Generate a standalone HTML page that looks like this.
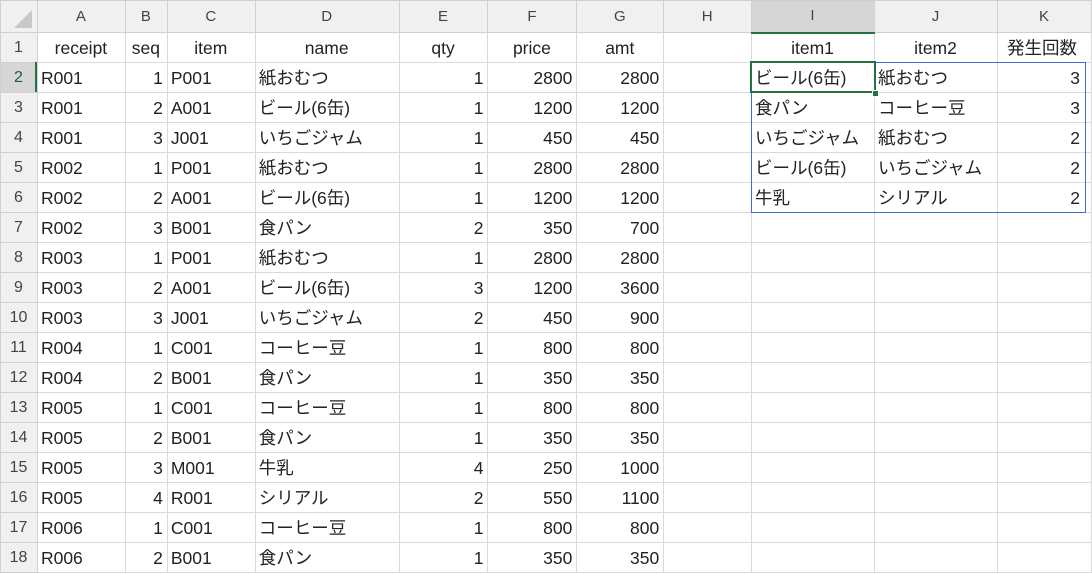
<!DOCTYPE html>
<html><head><meta charset="utf-8"><style>
body{margin:0;background:#fff;width:1092px;height:574px;overflow:hidden;position:relative;font-family:"Liberation Sans","Noto Sans CJK JP",sans-serif;}
table{border-collapse:collapse;table-layout:fixed;position:absolute;left:0;top:0;}
td{border:1px solid #dadada;height:30px;line-height:28px;padding:0 4px 0 3px;font-size:17.5px;color:#222;white-space:nowrap;overflow:hidden;box-sizing:border-box;vertical-align:middle;}
tr.h td{height:32px;background:#f0f0f0;color:#444;text-align:center;font-size:15px;border-color:#d0d0d0;}
td.r{background:#f0f0f0;color:#444;text-align:center;font-size:16px;border-color:#d0d0d0;}
.n{text-align:right}.c{text-align:center}
td.k{padding-right:11px}
</style></head><body>
<table>
<colgroup><col style="width:37px"><col style="width:88px"><col style="width:42px"><col style="width:88px"><col style="width:144px"><col style="width:89px"><col style="width:89px"><col style="width:87px"><col style="width:88px"><col style="width:123px"><col style="width:123px"><col style="width:94px"></colgroup>
<tr class="h"><td></td><td>A</td><td>B</td><td>C</td><td>D</td><td>E</td><td>F</td><td>G</td><td>H</td><td style="background:#d6d6d6;border-bottom:2px solid #217346;color:#1e5e38">I</td><td>J</td><td>K</td></tr>
<tr><td class="r">1</td><td class="c">receipt</td><td class="c">seq</td><td class="c">item</td><td class="c">name</td><td class="c">qty</td><td class="c">price</td><td class="c">amt</td><td></td><td class="c">item1</td><td class="c">item2</td><td class="c" style="padding-right:8px">発生回数</td></tr>
<tr><td class="r" style="background:#d6d6d6;color:#1e5e38">2</td><td>R001</td><td class="n">1</td><td>P001</td><td>紙おむつ</td><td class="n">1</td><td class="n">2800</td><td class="n">2800</td><td></td><td>ビール(6缶)</td><td>紙おむつ</td><td class="n k">3</td></tr>
<tr><td class="r">3</td><td>R001</td><td class="n">2</td><td>A001</td><td>ビール(6缶)</td><td class="n">1</td><td class="n">1200</td><td class="n">1200</td><td></td><td>食パン</td><td>コーヒー豆</td><td class="n k">3</td></tr>
<tr><td class="r">4</td><td>R001</td><td class="n">3</td><td>J001</td><td>いちごジャム</td><td class="n">1</td><td class="n">450</td><td class="n">450</td><td></td><td>いちごジャム</td><td>紙おむつ</td><td class="n k">2</td></tr>
<tr><td class="r">5</td><td>R002</td><td class="n">1</td><td>P001</td><td>紙おむつ</td><td class="n">1</td><td class="n">2800</td><td class="n">2800</td><td></td><td>ビール(6缶)</td><td>いちごジャム</td><td class="n k">2</td></tr>
<tr><td class="r">6</td><td>R002</td><td class="n">2</td><td>A001</td><td>ビール(6缶)</td><td class="n">1</td><td class="n">1200</td><td class="n">1200</td><td></td><td>牛乳</td><td>シリアル</td><td class="n k">2</td></tr>
<tr><td class="r">7</td><td>R002</td><td class="n">3</td><td>B001</td><td>食パン</td><td class="n">2</td><td class="n">350</td><td class="n">700</td><td></td><td></td><td></td><td></td></tr>
<tr><td class="r">8</td><td>R003</td><td class="n">1</td><td>P001</td><td>紙おむつ</td><td class="n">1</td><td class="n">2800</td><td class="n">2800</td><td></td><td></td><td></td><td></td></tr>
<tr><td class="r">9</td><td>R003</td><td class="n">2</td><td>A001</td><td>ビール(6缶)</td><td class="n">3</td><td class="n">1200</td><td class="n">3600</td><td></td><td></td><td></td><td></td></tr>
<tr><td class="r">10</td><td>R003</td><td class="n">3</td><td>J001</td><td>いちごジャム</td><td class="n">2</td><td class="n">450</td><td class="n">900</td><td></td><td></td><td></td><td></td></tr>
<tr><td class="r">11</td><td>R004</td><td class="n">1</td><td>C001</td><td>コーヒー豆</td><td class="n">1</td><td class="n">800</td><td class="n">800</td><td></td><td></td><td></td><td></td></tr>
<tr><td class="r">12</td><td>R004</td><td class="n">2</td><td>B001</td><td>食パン</td><td class="n">1</td><td class="n">350</td><td class="n">350</td><td></td><td></td><td></td><td></td></tr>
<tr><td class="r">13</td><td>R005</td><td class="n">1</td><td>C001</td><td>コーヒー豆</td><td class="n">1</td><td class="n">800</td><td class="n">800</td><td></td><td></td><td></td><td></td></tr>
<tr><td class="r">14</td><td>R005</td><td class="n">2</td><td>B001</td><td>食パン</td><td class="n">1</td><td class="n">350</td><td class="n">350</td><td></td><td></td><td></td><td></td></tr>
<tr><td class="r">15</td><td>R005</td><td class="n">3</td><td>M001</td><td>牛乳</td><td class="n">4</td><td class="n">250</td><td class="n">1000</td><td></td><td></td><td></td><td></td></tr>
<tr><td class="r">16</td><td>R005</td><td class="n">4</td><td>R001</td><td>シリアル</td><td class="n">2</td><td class="n">550</td><td class="n">1100</td><td></td><td></td><td></td><td></td></tr>
<tr><td class="r">17</td><td>R006</td><td class="n">1</td><td>C001</td><td>コーヒー豆</td><td class="n">1</td><td class="n">800</td><td class="n">800</td><td></td><td></td><td></td><td></td></tr>
<tr><td class="r">18</td><td>R006</td><td class="n">2</td><td>B001</td><td>食パン</td><td class="n">1</td><td class="n">350</td><td class="n">350</td><td></td><td></td><td></td><td></td></tr>
</table>
<div style="position:absolute;left:751px;top:62px;width:335px;height:151px;border:1px solid #3a6fcf;box-sizing:border-box"></div>
<div style="position:absolute;left:750px;top:61px;width:126px;height:32px;border:2px solid #217346;box-sizing:border-box"></div>
<div style="position:absolute;left:872px;top:90px;width:5px;height:5px;background:#217346;border:1px solid #fff"></div>
<div style="position:absolute;left:35px;top:62px;width:2px;height:30px;background:#217346"></div>
<div style="position:absolute;left:0;top:0;width:37px;height:32px"><svg width="37" height="32"><polygon points="32,10 32,28 14,28" fill="#c8c8c8"/></svg></div>
</body></html>
